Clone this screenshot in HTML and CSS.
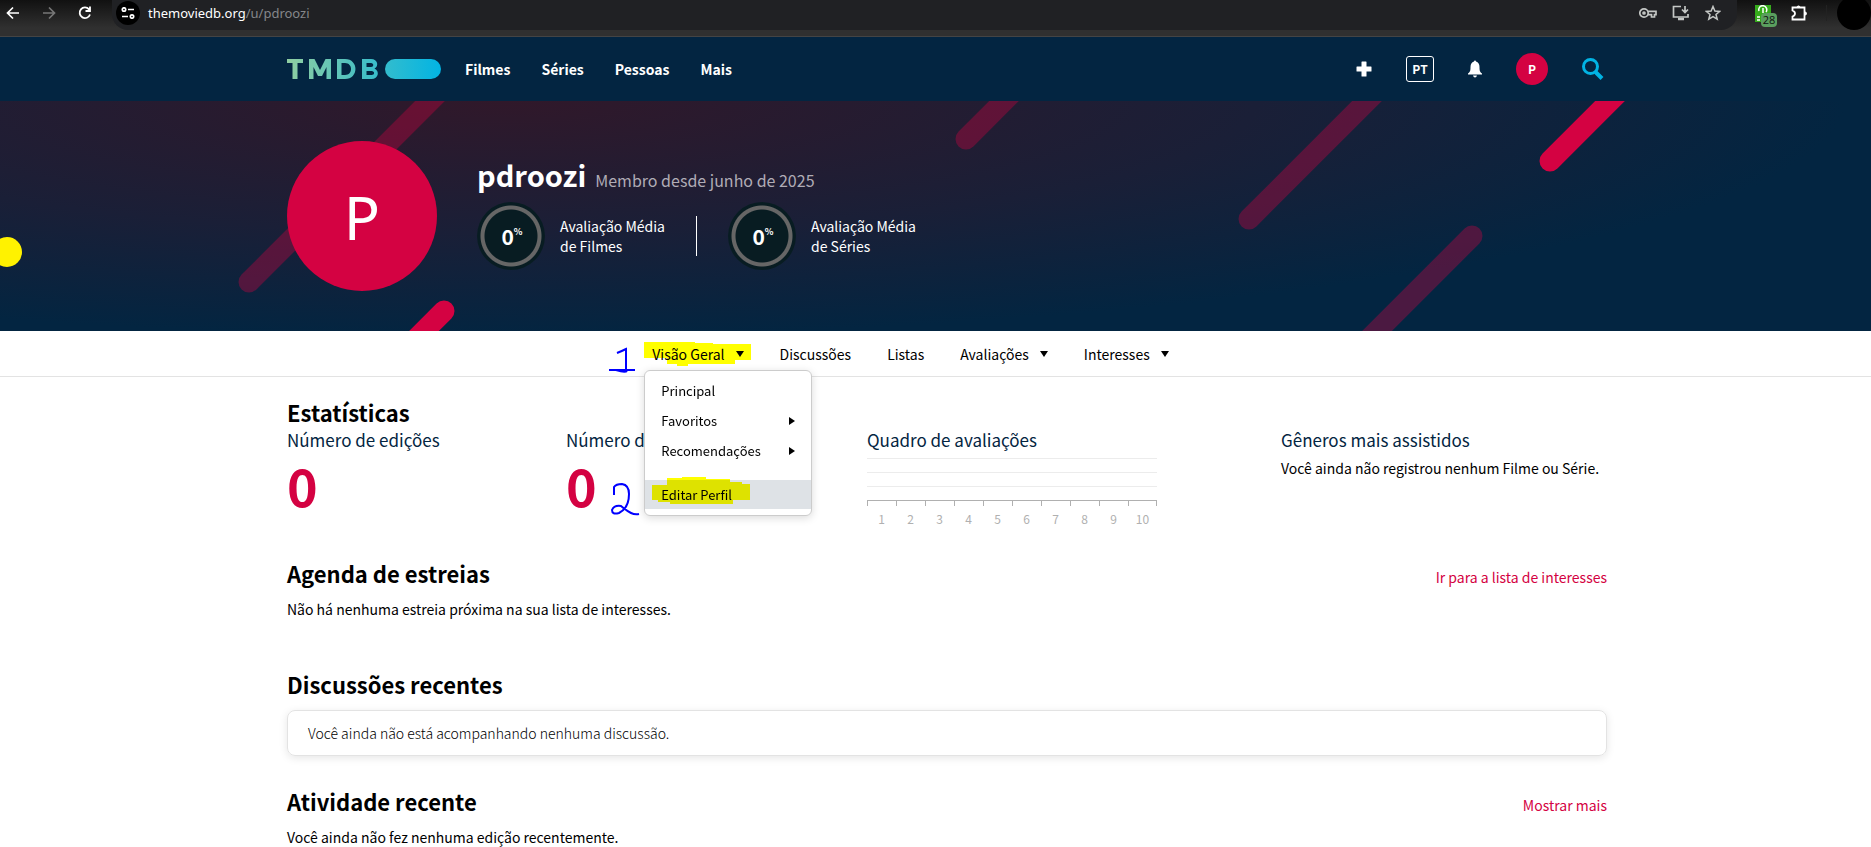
FILE: index.html
```html
<!DOCTYPE html>
<html lang="pt">
<head>
<meta charset="utf-8">
<title>pdroozi — TMDB</title>
<link rel="stylesheet" href="styles.css">
</head>
<body>
<div class="browser">
  <div class="browser-nav">
    <button class="tool" aria-label="Voltar"><svg width="14" height="14" viewBox="0 0 14 14" fill="none" stroke="#fff" stroke-width="1.700"><path d="M13 7H2M7 1.500L1.500 7L7 12.500"/></svg></button>
    <button class="tool" aria-label="Avançar"><svg width="14" height="14" viewBox="0 0 14 14" fill="none" stroke="#777" stroke-width="1.700"><path d="M1 7H12M7 1.500L12.500 7L7 12.500"/></svg></button>
    <button class="tool" aria-label="Recarregar"><svg width="14" height="14" viewBox="0 0 14 14" fill="none" stroke="#fff" stroke-width="1.800"><path d="M12 8.500A5.300 5.300 0 1 1 11 3.300M12 0.500V5H7.500"/></svg></button>
  </div>
  <div class="address">
    <span class="site-info"><svg width="14" height="12" viewBox="0 0 14 12" fill="none" stroke="#fff" stroke-width="1.700"><circle cx="3" cy="2.500" r="1.700"/><path d="M7 2.500H13M1 9.500H7"/><circle cx="11" cy="9.500" r="1.700"/></svg></span>
    <span class="url">themoviedb.org<span class="path">/u/pdroozi</span></span>
    <span class="address-tools">
      <svg width="18" height="12" viewBox="0 0 18 12" fill="none" stroke="#c4c7c5" stroke-width="1.700"><circle cx="5" cy="6" r="4.200"/><circle cx="5" cy="6" r="1"/><path d="M9 4.300H17V7.700H15.500V10H12.500V7.700H9"/></svg>
      <svg width="18" height="16" viewBox="0 0 18 16" fill="none" stroke="#c4c7c5" stroke-width="1.700"><path d="M9 1.500H1.500V12H16V9M13 1V7M10 4.500L13 7.500L16 4.500"/><path d="M6 14H12" stroke-width="2.500"/></svg>
      <svg width="16" height="16" viewBox="0 0 16 16" fill="none" stroke="#c4c7c5" stroke-width="1.500"><path d="M8 1.500L9.900 6L14.700 6.400L11 9.500L12.200 14.200L8 11.700L3.800 14.200L5 9.500L1.300 6.400L6.100 6Z"/></svg>
    </span>
  </div>
  <div class="extensions">
    <span class="ext"><svg width="16" height="17" viewBox="0 0 16 17"><path fill="#36ac1c" d="M0 0H16V17H0Z"/><path d="M4 6A4 4 0 1 1 11 7M8 3V8M2 12H5M2 15H5" fill="none" stroke="#fff" stroke-width="1.500"/></svg><span class="ext-count">28</span></span>
    <svg class="puzzle" width="17" height="18" viewBox="0 0 17 18" fill="none" stroke="#fff" stroke-width="1.800"><path d="M1.500 3.500H13.500V15.500H1.500V12.500Q4 11.500 4 9.500T1.500 6.500Z"/><path d="M6 3A1.600 1.600 0 0 1 9 3ZM14 8A1.500 1.500 0 0 1 14 11Z" fill="#fff" stroke-width="1"/></svg>
    <span class="ext-sep"></span>
    <span class="chrome-avatar"></span>
  </div>
</div>

<header class="site-header">
  <div class="container header-row">
    <a class="logo" href="#" aria-label="TMDB"><svg width="155" height="20" viewBox="0 0 155 20"><defs><linearGradient id="brand" gradientUnits="userSpaceOnUse" x1="0" x2="155" y1="0" y2="0"><stop offset="0" stop-color="#90cea1"/><stop offset=".56" stop-color="#3cbec9"/><stop offset="1" stop-color="#01b4e4"/></linearGradient></defs><path fill="url(#brand)" fill-rule="evenodd" d="M0 0H16V4H10.500V20H5.500V4H0ZM22 0H27.500L33 11L38.500 0H44V20H39.500V8L35 17H31L26.500 8V20H22ZM50 0H58C72 0 72 20 58 20H50ZM54.500 4V16H58C66 16 66 4 58 4ZM75 0H84C91 0 92 7.500 87.500 9.500C93 12 91.500 20 84.500 20H75ZM79.500 4V8H84C87 8 87 4 84 4ZM79.500 12V16H84.500C88 16 88 12 84.500 12Z"/><rect x="98" width="56" height="20" rx="10" fill="url(#brand)"/></svg></a>
    <nav class="main-nav"><a href="#">Filmes</a><a href="#">Séries</a><a href="#">Pessoas</a><a href="#">Mais</a></nav>
    <div class="header-tools">
      <button class="tool" aria-label="Adicionar"><svg width="16" height="16" viewBox="0 0 16 16" fill="#fff"><path d="M5.500 1Q5.500 .5 6 .5H10Q10.500 .5 10.500 1V5.500H15Q15.500 5.500 15.500 6V10Q15.500 10.500 15 10.500H10.500V15Q10.500 15.500 10 15.500H6Q5.500 15.500 5.500 15V10.500H1Q.5 10.500 .5 10V6Q.5 5.500 1 5.500H5.500Z"/></svg></button>
      <button class="lang">PT</button>
      <button class="tool" aria-label="Notificações"><svg width="14" height="18" viewBox="0 0 14 18" fill="#fff"><path d="M6 1.500Q6 .5 7 .5T8 1.500Q11.500 2.500 11.500 7C11.500 11 12 12 14 13.500V14.500H0V13.500C2 12 2.500 11 2.500 7Q2.500 2.500 6 1.500ZM5 15.500H9Q8.500 17.500 7 17.500T5 15.500Z"/></svg></button>
      <button class="user-dot">P</button>
      <button class="tool" aria-label="Pesquisar"><svg width="22" height="23" viewBox="0 0 22 23" fill="none" stroke="#01b4e4"><circle cx="8.500" cy="8.500" r="7" stroke-width="3"/><path d="M13.500 14L20 20.500" stroke-width="4"/></svg></button>
    </div>
  </div>
</header>

<section class="hero">
  <svg class="hero-art" viewBox="0 0 1871 230" preserveAspectRatio="xMidYMid slice" fill="none" stroke="#d40242" stroke-width="21" stroke-linecap="round"><g opacity=".35"><path d="M249 181L450 -20"/><path d="M966 38L1024 -20"/><path d="M1249 118L1387 -20"/><path d="M1472 135L1352 255"/></g><path d="M444 210L404 250M1550 60L1630 -20"/></svg>
  <span class="marker-dot"></span>
  <div class="container hero-row">
    <div class="avatar">P</div>
    <div>
      <div class="name-row"><h1>pdroozi</h1><span class="since">Membro desde junho de 2025</span></div>
      <div class="scores">
        <div class="score"><span class="ring">0<sup>%</sup></span><span>Avaliação Média<br>de Filmes</span></div>
        <span class="divider"></span>
        <div class="score"><span class="ring">0<sup>%</sup></span><span>Avaliação Média<br>de Séries</span></div>
      </div>
    </div>
  </div>
</section>

<nav class="subnav">
  <div class="subnav-item open">
    <svg class="hl-tab" width="108" height="30" viewBox="0 0 108 30" fill="#ff0"><path d="M0 0H51V1H69V2H107V18H91V22H44V24H33V22H23V16H0Z"/></svg>
    <svg class="ink-one" width="28" height="30" viewBox="0 0 28 30" fill="none" stroke="#00f" stroke-width="2"><path d="M9 6Q14 4 18 2V24M1 23H27M8 23Q17 26 19 24"/></svg>
    <button class="tab">Visão Geral<span class="caret"></span></button>
    <div class="menu">
      <a href="#">Principal</a>
      <a href="#">Favoritos<span class="caret-right"></span></a>
      <a href="#">Recomendações<span class="caret-right"></span></a>
      <a href="#" class="current">Editar Perfil<svg class="hl-edit" width="98" height="33" viewBox="0 0 98 33" fill="#ff0"><path d="M15 1H30V0H54V2H78V5H90V7H98V23H81V27H18V25H6V23H0V8H15Z"/></svg></a>
    </div>
    <svg class="ink-two" width="30" height="34" viewBox="0 0 30 34" fill="none" stroke="#00f" stroke-width="2"><path d="M4 13V5Q6 2 12 2Q19 3 19 12C19 22 15 28 9 31Q2 33 2 28Q4 23 11 24Q17 29 21 31Q25 33 29 32"/></svg>
  </div>
  <button class="tab">Discussões</button>
  <button class="tab">Listas</button>
  <button class="tab">Avaliações<span class="caret"></span></button>
  <button class="tab">Interesses<span class="caret"></span></button>
</nav>

<main class="page">
  <div class="container">
  <section>
    <h2>Estatísticas</h2>
    <div class="stats">
      <div class="stat"><h3>Número de edições</h3><p class="big">0</p></div>
      <div class="stat"><h3>Número de avaliações</h3><p class="big">0</p></div>
      <div class="stat"><h3>Quadro de avaliações</h3>
        <div class="chart"><div class="plot"><i></i><i></i><i></i></div>
        <ol class="axis"><li>1</li><li>2</li><li>3</li><li>4</li><li>5</li><li>6</li><li>7</li><li>8</li><li>9</li><li>10</li></ol></div>
      </div>
      <div class="stat"><h3>Gêneros mais assistidos</h3><p class="note">Você ainda não registrou nenhum Filme ou Série.</p></div>
    </div>
  </section>
  <section class="agenda">
    <div class="head"><h2>Agenda de estreias</h2><a href="#">Ir para a lista de interesses</a></div>
    <p>Não há nenhuma estreia próxima na sua lista de interesses.</p>
  </section>
  <section class="talks">
    <div class="head"><h2>Discussões recentes</h2></div>
    <div class="card">Você ainda não está acompanhando nenhuma discussão.</div>
  </section>
  <section>
    <div class="head"><h2>Atividade recente</h2><a href="#">Mostrar mais</a></div>
    <p>Você ainda não fez nenhuma edição recentemente.</p>
  </section>
  </div>
</main>
</body>
</html>
```
FILE: styles.css
```css
* { box-sizing: border-box; }
body {
  margin: 0;
  background: #fff;
  color: #000;
  font: 14px/20px "Noto Sans CJK SC", "Noto Sans", sans-serif;
  overflow: hidden;
}
h1, h2, h3, p, ol { margin: 0; padding: 0; font-weight: 400; }
a { color: inherit; text-decoration: none; }
button { border: 0; padding: 0; background: none; color: inherit; font: inherit; }
svg { display: block; flex: none; }
.tool { display: flex; }
.container { max-width: 1320px; margin: 0 auto; }

/* Browser toolbar */
.browser {
  display: flex;
  height: 37px;
  background: linear-gradient(#111, #303030 28px);
  border-bottom: 1px solid #444;
}
.browser-nav { display: flex; align-items: center; gap: 22px; padding: 0 20px 0 6px; height: 26px; flex: none; }
.address {
  flex: 1;
  display: flex;
  align-items: center;
  height: 30px;
  padding: 0 16px 4px 4px;
  background: #202124;
  border-radius: 0 0 16px 16px;
}
.site-info { display: flex; align-items: center; justify-content: center; width: 24px; height: 24px; border-radius: 50%; background: #000; }
.url { margin-left: 8px; font: 13px/20px "Noto Sans", sans-serif; color: #fff; }
.path { color: #85878a; }
.address-tools { display: flex; align-items: center; gap: 15px; margin-left: auto; }
.extensions { display: flex; align-items: center; height: 26px; padding-left: 18px; flex: none; }
.ext { position: relative; }
.ext-count {
  position: absolute;
  left: 6px;
  top: 8px;
  width: 16px;
  height: 14px;
  border-radius: 4px;
  background: #5a9e5e;
  color: #111;
  font: 11px/14px "Open Sans", sans-serif;
  text-align: center;
}
.puzzle { margin: 0 18px 0 20px; }
.ext-sep { width: 1px; height: 16px; background: #222; }
.chrome-avatar { width: 34px; height: 34px; margin-left: 10px; border-radius: 50%; background: #000; }

/* Site header */
.site-header { background: #032541; color: #fff; padding-left: 23px; }
.header-row { display: flex; align-items: center; height: 64px; }
.main-nav { display: flex; gap: 31px; margin-left: 23px; font-weight: 700; }
.header-tools { display: flex; align-items: center; margin-left: auto; gap: 34px; padding-right: 3px; }
.lang { width: 28px; height: 26px; border: 1px solid #fff; border-radius: 3px; font-size: 12px; line-height: 24px; font-weight: 700; }
.user-dot { width: 32px; height: 32px; border-radius: 50%; background: #d40242; font-size: 12px; font-weight: 700; }

/* Profile banner */
.hero {
  position: relative;
  overflow: hidden;
  padding: 40px 0 40px 23px;
  color: #fff;
  background: radial-gradient(1340px 235px at 27% 0, #30182a, #1a1f37 56%, #032541);
}
.hero-art { position: absolute; inset: 0; width: 100%; height: 100%; }
.marker-dot { position: absolute; left: -8px; top: 136px; width: 30px; height: 30px; border-radius: 50%; background: #fff200; }
.hero-row { position: relative; display: flex; align-items: center; gap: 40px; }
.avatar { width: 150px; height: 150px; border-radius: 50%; background: #d40242; font: 60px/152px "Noto Sans", sans-serif; text-align: center; }
.name-row { display: flex; align-items: baseline; gap: 9px; }
h1 { font-size: 29px; line-height: 38px; font-weight: 700; }
.since { font-size: 16px; color: #b0acb6; }
.scores { display: flex; align-items: center; gap: 31px; margin: 9px 0 7px; }
.score { display: flex; align-items: center; gap: 15px; }
.ring {
  display: flex;
  align-items: center;
  justify-content: center;
  width: 68px;
  height: 68px;
  padding-left: 2px;
  border-radius: 50%;
  background: radial-gradient(circle, #081c22 26px, #666 27px 30px, #081c22 31px);
  font-size: 21px;
  font-weight: 700;
}
.ring sup { font-size: 9px; line-height: 8px; margin-bottom: 8px; }
.divider { width: 1px; height: 40px; background: #fff; }

/* Profile tabs */
.subnav { display: flex; justify-content: center; gap: 36px; height: 46px; padding-right: 50px; border-bottom: 1px solid #e3e3e3; }
.tab { position: relative; display: flex; align-items: center; height: 46px; }
.caret { margin-left: 11px; border: 4px solid transparent; border-top: 6px solid #000; border-bottom: 0; }
.subnav-item { position: relative; }
.hl-tab { position: absolute; left: -8px; top: 11px; }
.ink-one { position: absolute; left: -44px; top: 16px; }
.ink-two { position: absolute; left: -42px; top: 151px; z-index: 3; }
.menu {
  position: absolute;
  left: -8px;
  top: 39px;
  z-index: 2;
  width: 168px;
  padding: 5px 0 6px;
  background: #fff;
  border: 1px solid #ccc;
  border-radius: 6px;
  box-shadow: 0 2px 8px rgba(0, 0, 0, .15);
  font-size: 13px;
}
.menu a { position: relative; display: flex; align-items: center; justify-content: space-between; height: 30px; padding: 0 16px; }
.menu .current { height: 29px; margin-top: 14px; background: #dee2e6; }
.caret-right { border: 4px solid transparent; border-left: 6px solid #000; border-right: 0; }
.hl-edit { position: absolute; left: 7px; top: -3px; mix-blend-mode: multiply; }

/* Page content */
.page { padding: 21px 0 0 23px; }
h2 { font-size: 22px; line-height: 28px; font-weight: 700; }
h3 { font-size: 17px; line-height: 28px; color: #032541; }
.stats { display: grid; grid-template-columns: 279px 301px 1fr 326px; }
.big { font-size: 52px; line-height: 62px; font-weight: 700; color: #d40242; }
.note { margin-top: 4px; }
.chart { width: 290px; margin-top: 4px; }
.plot { display: grid; grid-template-rows: repeat(3, 14px); border-bottom: 1px solid #b0b0b0; }
.plot i { border-top: 1px solid #ececec; }
.axis { display: grid; grid-template-columns: repeat(10, 1fr); list-style: none; color: #b0b0b0; font-size: 12px; line-height: 16px; text-align: center; }
.axis li { padding-top: 10px; background: linear-gradient(#b0b0b0, #b0b0b0) 0 0 / 1px 5px no-repeat; }
.axis li:last-child { background: linear-gradient(#b0b0b0, #b0b0b0) 0 0 / 1px 5px no-repeat, linear-gradient(#b0b0b0, #b0b0b0) 100% 0 / 1px 5px no-repeat; }
.head { display: flex; align-items: baseline; justify-content: space-between; margin-bottom: 12px; }
.head a { color: #d40242; }
.agenda { margin-top: 32px; }
.talks { margin: 51px 0 31px; }
.card { border: 1px solid #e3e3e3; border-radius: 8px; padding: 12px 20px; box-shadow: 0 2px 8px rgba(0, 0, 0, .1); font-weight: 300; }
```
